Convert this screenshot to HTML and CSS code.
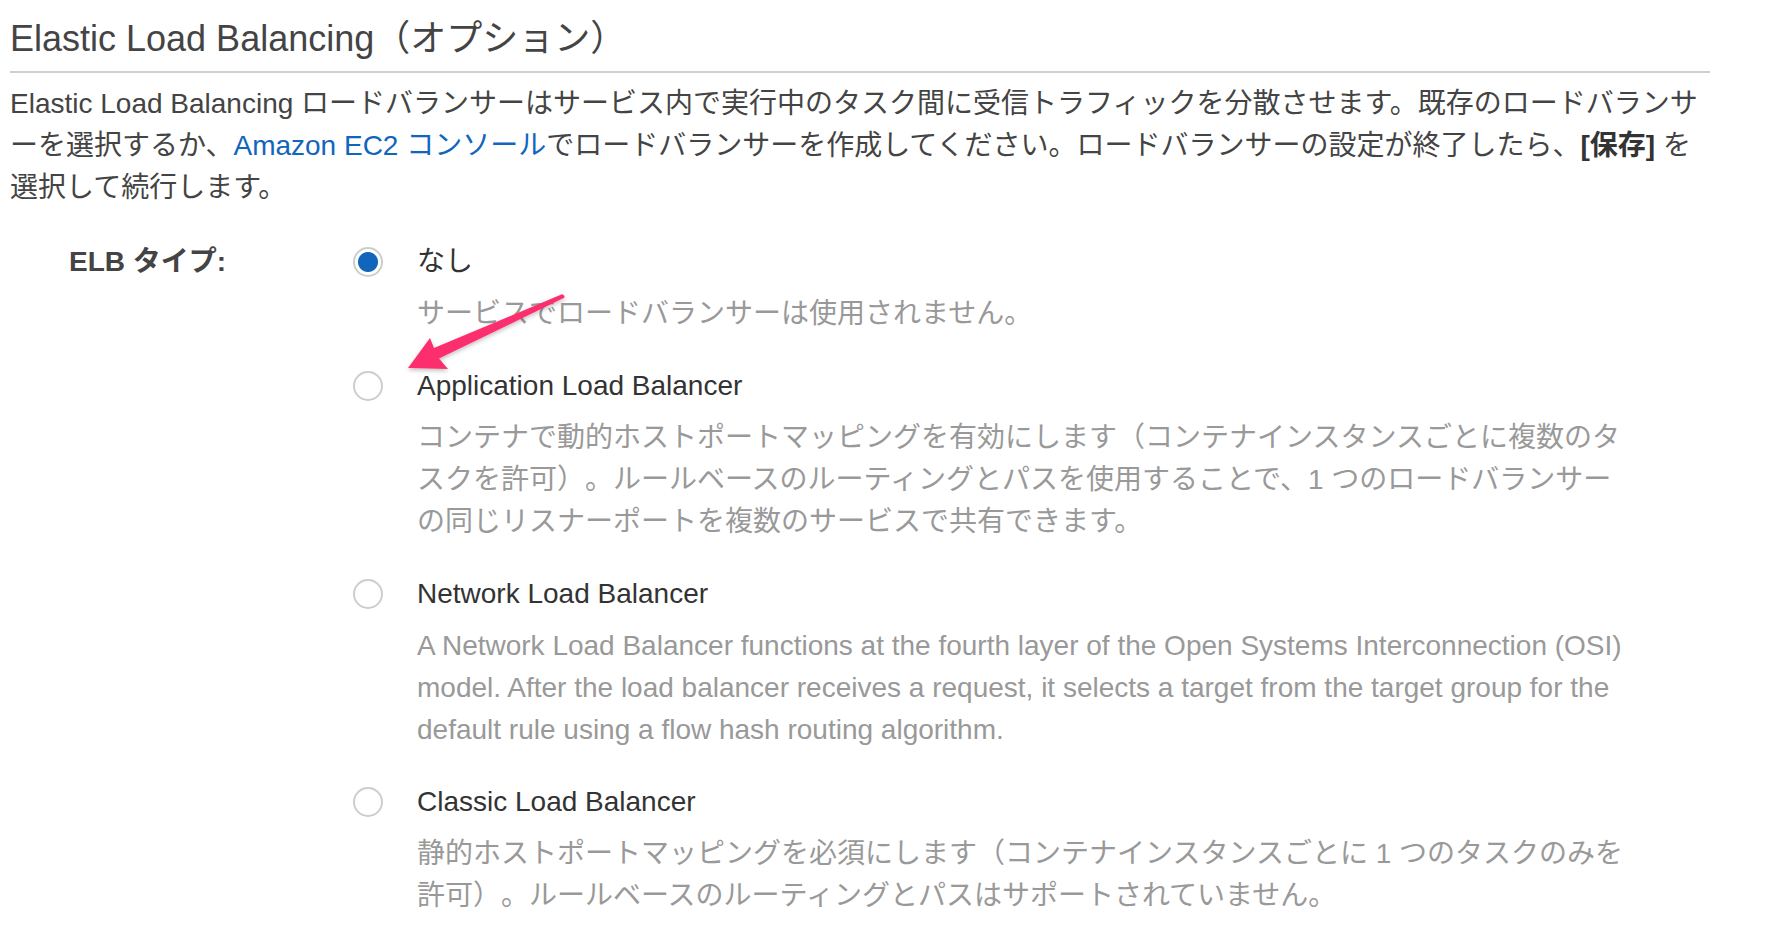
FILE: index.html
```html
<!DOCTYPE html>
<html lang="ja">
<head>
<meta charset="utf-8">
<title>Elastic Load Balancing</title>
<link rel="stylesheet" href="styles.css">
</head>
<body>
<div class="page">
  <h2 class="title">Elastic Load Balancing（オプション）</h2>
  <p class="intro">Elastic Load Balancing ロードバランサーはサービス内で実行中のタスク間に受信トラフィックを分散させます。既存のロードバランサーを選択するか、<a class="link" href="#">Amazon EC2 コンソール</a>でロードバランサーを作成してください。ロードバランサーの設定が終了したら、<b class="strong">[保存]</b> を選択して続行します。</p>

  <div class="field">
    <div class="field-label">ELB タイプ:</div>
    <div class="options">
      <div class="option">
        <input class="radio" type="radio" name="elb" checked>
        <span class="option-name">なし</span>
        <p class="option-desc">サービスでロードバランサーは使用されません。</p>
      </div>
      <div class="option">
        <input class="radio" type="radio" name="elb">
        <span class="option-name">Application Load Balancer</span>
        <p class="option-desc">コンテナで動的ホストポートマッピングを有効にします（コンテナインスタンスごとに複数のタスクを許可）。ルールベースのルーティングとパスを使用することで、1 つのロードバランサーの同じリスナーポートを複数のサービスで共有できます。</p>
      </div>
      <div class="option">
        <input class="radio" type="radio" name="elb">
        <span class="option-name">Network Load Balancer</span>
        <p class="option-desc">A Network Load Balancer functions at the fourth layer of the Open Systems Interconnection (OSI) model. After the load balancer receives a request, it selects a target from the target group for the default rule using a flow hash routing algorithm.</p>
      </div>
      <div class="option">
        <input class="radio" type="radio" name="elb">
        <span class="option-name">Classic Load Balancer</span>
        <p class="option-desc">静的ホストポートマッピングを必須にします（コンテナインスタンスごとに 1 つのタスクのみを許可）。ルールベースのルーティングとパスはサポートされていません。</p>
      </div>
    </div>
  </div>
</div>

<svg class="annotation" width="1776" height="944" viewBox="0 0 1776 944" aria-hidden="true">
  <defs>
    <filter id="shadow" x="-20%" y="-20%" width="140%" height="140%">
      <feDropShadow dx="0" dy="2" stdDeviation="2" flood-color="#000" flood-opacity="0.25"/>
    </filter>
  </defs>
  <path class="arrow" filter="url(#shadow)" d="M408 368 L430 338 L434 348 L562 294.3 Q565.5 295.5 564.2 297.8 L439 358.5 L448 369 Z"/>
</svg>
</body>
</html>
```

FILE: styles.css
```css
html, body {
  margin: 0;
  padding: 0;
  background: #fff;
}

body {
  font-family: "Liberation Sans", "Noto Sans CJK JP", sans-serif;
  color: #444;
  text-spacing-trim: space-all;
}

.page {
  width: 1700px;
  padding-left: 10px;
}

.title {
  margin: 0;
  padding: 19px 0 12px;
  font-size: 36px;
  line-height: 40px;
  font-weight: normal;
  color: #444;
  border-bottom: 2px solid #cfcfcf;
}

.intro {
  margin: 10px 0 0;
  font-size: 28px;
  line-height: 42px;
  line-break: loose;
}

.link {
  color: #1166bb;
  text-decoration: none;
}

.strong {
  font-weight: bold;
  color: #333;
}

.field {
  display: grid;
  grid-template-columns: 343px 1fr;
  margin-top: 32px;
}

.field-label {
  padding-left: 59px;
  font-size: 28px;
  line-height: 42px;
  font-weight: bold;
  color: #444;
}

.options {
  display: flex;
  flex-direction: column;
  gap: 30px;
}

.option {
  display: grid;
  grid-template-columns: 30px 1218px;
  column-gap: 34px;
  row-gap: 10px;
}

.radio {
  appearance: none;
  -webkit-appearance: none;
  width: 30px;
  height: 30px;
  margin: 6px 0 0;
  border: 2px solid #cdcdcd;
  border-radius: 50%;
  background: #fff;
  box-sizing: border-box;
}

.radio:checked {
  background: radial-gradient(circle, #1166bb 0, #1166bb 9.5px, #fff 10.5px);
}

.option-name {
  font-size: 28px;
  line-height: 42px;
  color: #333;
}

.option-desc {
  grid-column: 2;
  margin: 0;
  font-size: 28px;
  line-height: 42px;
  color: #999;
}

.annotation {
  position: absolute;
  left: 0;
  top: 0;
  pointer-events: none;
}

.arrow {
  fill: #fd2f6d;
}
```
